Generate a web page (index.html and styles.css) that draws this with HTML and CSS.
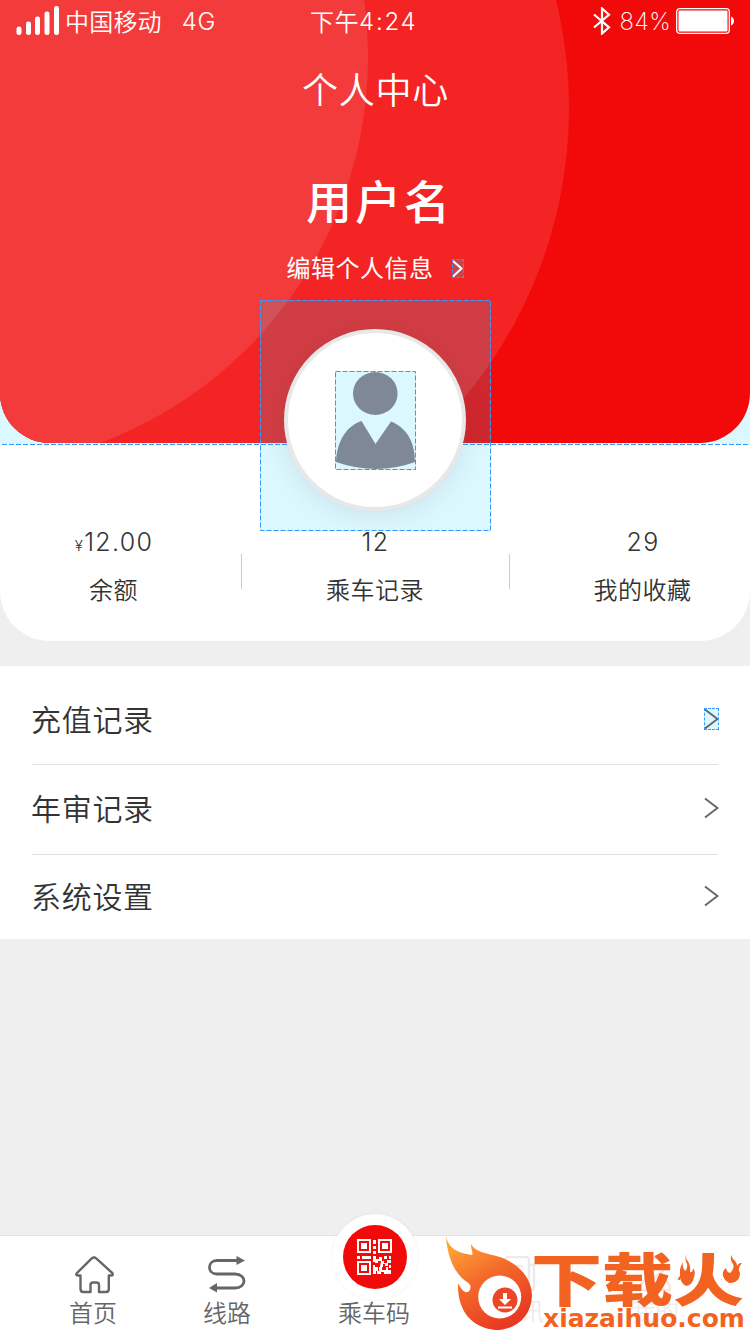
FILE: index.html
```html
<!DOCTYPE html>
<html lang="zh-CN">
<head>
<meta charset="utf-8">
<title>个人中心</title>
<link rel="stylesheet" href="styles.css">
</head>
<body>
<main class="app">
  <section class="summary">
    <header class="hero">
      <svg class="hero-art" viewBox="0 0 750 443" aria-hidden="true">
        <circle cx="116" cy="108" r="453" fill="#f42424"/>
        <circle cx="-44" cy="57" r="412" fill="#f43b3b"/>
      </svg>
      <div class="status">
        <div class="status-left">
          <svg width="44" height="30" viewBox="0 0 44 30" fill="#fff"><rect x=".5" y="20.500" width="5" height="8.500" rx="2.300"/><rect x="10" y="15.500" width="5" height="13.500" rx="2.300"/><rect x="19" y="10.500" width="5" height="18.500" rx="2.300"/><rect x="28.500" y="5.500" width="5" height="23.500" rx="2.300"/><rect x="38" y="0" width="5" height="29" rx="2.300"/></svg>
          <span class="carrier">中国移动</span><span class="net">4G</span>
        </div>
        <span class="clock"><span>下午</span><span class="clock-digits">4:24</span></span>
        <div class="status-right">
          <svg width="18" height="28" viewBox="0 0 18 28" fill="none" stroke="#fff" stroke-width="2.200"><path d="M1 7.500 16 20.300 9 26.500V1.500L16 7.700 1 20.500"/></svg>
          <span class="percent">84%</span>
          <svg width="58" height="26" viewBox="0 0 58 26"><rect x=".7" y=".7" width="52.600" height="24.600" rx="3" fill="none" stroke="#fff" stroke-width="1.300"/><rect x="2.500" y="2.500" width="49" height="21" rx="1" fill="#fff"/><path d="M55 8.500c4 1 4 8 0 9z" fill="#fff"/></svg>
        </div>
      </div>
      <h1 class="title">个人中心</h1>
      <h2 class="username">用户名</h2>
      <a class="edit"><span>编辑个人信息</span><span class="mark mark-edit"><svg width="11" height="17" viewBox="0 0 11 17" fill="none" stroke="#fff" stroke-width="2"><path d="m1 1 8.500 7.500L1 16.500"/></svg></span></a>
    </header>
    <div class="avatar-area">
      <div class="avatar">
        <svg width="81" height="99" viewBox="0 0 81 99"><rect width="81" height="99" fill="#dbf8ff"/><g fill="#7f8897"><ellipse cx="40.300" cy="22.500" rx="22.300" ry="21.500"/><path d="M26.500 50 40.500 73 56 50.500C70 56 80 69 80 91Q61 98 41 98 21 98 1 91C2 69 12 55 26.500 50Z"/></g><rect x=".5" y=".5" width="80" height="98" fill="none" stroke="#39f" stroke-dasharray="5 2"/></svg>
      </div>
      <svg class="avatar-frame" width="231" height="231"><rect x=".5" y=".5" width="230" height="230" fill="none" stroke="#39f" stroke-dasharray="5 2"/></svg>
    </div>
    <svg class="guide" width="750" height="1" aria-hidden="true"><path d="M2 .5H287M463 .5H750" stroke="#39f" stroke-dasharray="5 2"/></svg>
    <div class="stats">
      <div class="stat"><span class="value"><small>¥</small>12.00</span><span class="label">余额</span></div>
      <div class="stat"><span class="value">12</span><span class="label">乘车记录</span></div>
      <div class="stat"><span class="value">29</span><span class="label">我的收藏</span></div>
    </div>
  </section>

  <nav class="list">
    <a class="row row-first"><span>充值记录</span><span class="mark"><svg class="chev" width="15" height="22" viewBox="0 0 15 22"><path d="M1 1.500 13.500 11 1 20.500"/></svg></span></a>
    <a class="row row-middle"><span>年审记录</span><svg class="chev" width="15" height="22" viewBox="0 0 15 22"><path d="M1 1.500 13.500 11 1 20.500"/></svg></a>
    <a class="row row-last"><span>系统设置</span><svg class="chev" width="15" height="22" viewBox="0 0 15 22"><path d="M1 1.500 13.500 11 1 20.500"/></svg></a>
  </nav>

  <footer class="tabs">
    <a class="tab tab-home"><svg width="40" height="38" viewBox="0 0 40 38" fill="none" stroke="#666" stroke-width="2.400" stroke-linejoin="round"><path d="M16.500 2.600Q19 .6 21.500 2.600L37.300 17Q38.700 19.500 36 19.500H33.800V33Q33.800 36 31 36H24V29Q24 26.500 21.500 26.500H18Q15.500 26.500 15.500 29V36H8.500Q5.500 36 5.500 33V19.500H3Q.2 19.500 2 17Z"/></svg><span>首页</span></a>
    <a class="tab tab-line"><svg width="38" height="38" viewBox="0 0 38 38"><path d="M30 4.500H9C-1 4.500-1 18 9 18H27C39 18 39 32 27 32H7" fill="none" stroke="#666" stroke-width="2.800"/><path d="m28.500 0 8.500 4.500-8.500 4.500zM9 27v9.500L1 32z" fill="#666"/></svg><span>线路</span></a>
    <a class="tab tab-code">
      <span class="code-ring"><span class="code-dot"><svg width="36" height="36" viewBox="0 0 36 36" fill="#fff"><path fill-rule="evenodd" d="M0 0h14v14H0zM2 2v10h10V2zM21 0h14v14H21zM23 2v10h10V2zM0 22h14v14H0zM2 24v10h10V24zM4 4h6v6H4zM25 4h6v6h-6zM4 26h6v6H4z"/><path d="M16 1h3v4h-3zM16 7h3v3h-3zM16 12h3v3h-3zM0 17h3v3H0zM5 17h9v3H5zM16 17h3v3h3v-2h3v4h-4v2h-3v4h3v4h-2v3h-3v-9h2v-3h-2zM27 17h3v3h-3zM32 17h2v3h-2zM24 22h3v2h3v-3h4v3h-3v3h-3v-2h-2v3h-3zM32 26h2v3h-2zM22 28h3v3h4v-3h2v3h3v4h-7v-2h-3v2h-4v-3h2z"/></svg></span></span>
      <span>乘车码</span>
    </a>
    <a class="tab tab-news"><svg width="38" height="36" viewBox="0 0 38 36" fill="none" stroke="#666" stroke-width="2.500"><rect x="4" y="1" width="24" height="33" rx="3"/><path d="M28 9h5v23q0 2-3 2H9M10 10h12M10 19h12"/></svg><span>资讯</span></a>
    <a class="tab tab-me"><svg width="38" height="36" viewBox="0 0 38 36" fill="none" stroke="#f20c0c" stroke-width="2.500"><circle cx="19" cy="11" r="9"/><path d="M4 34q0-12 15-12t15 12z"/></svg><span>我的</span></a>
  </footer>

  <div class="brand">
    <svg class="flame" width="90" height="96" viewBox="0 0 90 96"><defs><linearGradient id="fire" gradientUnits="userSpaceOnUse" x1="5" y1="10" x2="52" y2="92"><stop offset="0" stop-color="#ffa334"/><stop offset=".45" stop-color="#f46a2b"/><stop offset="1" stop-color="#e83a22"/></linearGradient></defs><path fill="url(#fire)" d="M1 0C4 11 12 16 27 18 28.500 16 26 13 26 7 29 13 36 15 45 17.500 70 22 87 39 87 59 86 80 71 93 50 93 27 91 12 74 13 46 16 52 19 56 23 55 27 52 26 47 22 45 14 40 3 27 1 0Z"/><circle cx="54.700" cy="60" r="21.500" fill="#fff"/><circle cx="60" cy="63" r="12.500" fill="#ec4528"/><path d="M58 56h4v6h4l-6 6-6-6h4zM53 69.500h14v2H53z" fill="#fff"/></svg>
    <div class="brand-copy">
      <div class="brand-name"><span>下</span><span>载</span><span>火</span></div>
      <div class="brand-url">xiazaihuo.com</div>
    </div>
    <svg class="sparks" width="68" height="34" viewBox="0 0 68 34"><path fill="#fff" d="M-2 3H17V31H-2zM42 3h26v26H42z"/><path fill="#f26322" d="M7 0Q4 5 7 11 8 16 5 18 2 15 3 9-2 18 0 25 2 32 7 33 13 31 14 24 16 19 13 15 13 20 10 19 11 12 7 7 5 4 7 0ZM52 1Q49 6 53 11 55 16 50 20 47 20 46 15 42 18 43 23 45 29 51 30 60 29 60 20 57 15 62 10 57 10 57 15 58 10 53 6 51 3 52 1Z"/></svg>
  </div>
</main>
</body>
</html>
```
FILE: styles.css
```css
* { box-sizing: border-box; }
body { margin: 0; background: #efefef; font-family: "Noto Sans CJK SC", sans-serif; font-weight: 350; color: #333; }
svg { display: block; flex: none; }
.app { position: relative; width: 750px; height: 1334px; overflow: hidden; display: flex; flex-direction: column; }

.summary { position: relative; height: 641px; background: linear-gradient(#dbf8ff 444px, #fff 444px); border-radius: 0 0 50px 50px; display: flex; flex-direction: column; }
.hero { position: relative; height: 443px; flex: none; background: #f20a0a; border-radius: 0 0 50px 50px; overflow: hidden; color: #fff; display: flex; flex-direction: column; align-items: center; }
.hero-art { position: absolute; inset: 0; }
.status, .title, .username, .edit { position: relative; }
.status { width: 750px; height: 42px; padding: 0 16px 2px; display: grid; grid-template-columns: 294px 108px 1fr; align-items: center; font-size: 24px; line-height: 40px; }
.status-left, .status-right, .clock { display: flex; align-items: center; }
.carrier { margin-left: 5px; padding-bottom: 1px; letter-spacing: .2px; }
.net { margin-left: 20px; padding-top: 2px; font-family: Inter, sans-serif; font-weight: 300; letter-spacing: .5px; }
.clock { white-space: nowrap; letter-spacing: .5px; line-height: 38px; }
.clock-digits { font-family: Inter, sans-serif; font-weight: 350; letter-spacing: 1.8px; padding-top: 2px; }
.status-right { justify-content: flex-end; }
.percent { margin: 0 5px 0 9px; padding-top: 2px; font-family: Inter, sans-serif; font-weight: 200; letter-spacing: .3px; }
.title { margin: 18px 0 0 1px; font-size: 36px; line-height: 56px; font-weight: 350; letter-spacing: .8px; }
.username { margin: 48px 0 0 9px; font-size: 46px; line-height: 70px; font-weight: 500; letter-spacing: 3px; }
.edit { margin: 14px 0 0; height: 40px; display: flex; align-items: center; font-size: 24px; line-height: 38px; font-weight: 400; letter-spacing: .5px; }
.edit > span:first-child { padding-bottom: 2px; }
.mark { background: rgba(15,208,255,.15); outline: 1px dashed #39f; outline-offset: -1px; }
.mark-edit { margin-left: 18px; width: 12px; height: 19px; padding-top: 1px; background: rgba(15,208,255,.2); }

.avatar-area { position: absolute; left: 260px; top: 300px; width: 231px; height: 231px; background: rgba(15,208,255,.15); padding: 29px 0 0 24px; }
.avatar { width: 182px; height: 182px; border: 4px solid #e8e8e8; border-radius: 50%; background: #fff; box-shadow: 0 4px 24px rgba(90,30,50,.1); padding: 38px 0 0 47px; }
.avatar-frame { position: absolute; inset: 0; }
.guide { position: absolute; left: 0; top: 444px; }

.stats { margin-top: 79px; display: grid; grid-template-columns: 241px 268px 241px; }
.stat { position: relative; display: flex; flex-direction: column; align-items: center; }
.stat:first-child { padding-right: 14px; }
.stat:last-child { padding-left: 26px; }
.stat + .stat::before { content: ""; position: absolute; left: 0; top: 32px; width: 1px; height: 35px; background: #ccc; }
.value { height: 40px; font: 300 25px/40px Inter, sans-serif; letter-spacing: 1.3px; padding-left: 1px; }
.value small { font-size: 15px; line-height: 1; }
.label { margin-top: 7px; font-size: 24px; line-height: 40px; letter-spacing: .5px; }

.list { margin-top: 25px; height: 273px; padding: 0 31px; background: #fff; }
.row { position: relative; display: flex; justify-content: space-between; align-items: center; font-size: 30px; line-height: 44px; letter-spacing: .7px; }
.row > span:first-child { padding-bottom: 2px; }
.row::after { content: ""; position: absolute; left: 1px; right: 1px; bottom: 0; height: 1px; background: #e0e0e0; }
.row-first { height: 99px; padding-top: 7px; }
.row-middle { height: 90px; padding-bottom: 4px; }
.row-last { height: 84px; padding-bottom: 2px; }
.row-last::after { display: none; }
.chev path { fill: none; stroke: #666; stroke-width: 2; }

.tabs { margin-top: auto; height: 99px; background: #fff; border-top: 1px solid #e4e4e4; display: grid; grid-template-columns: 186px 82px 212px 80px 190px; font-size: 24px; color: #666; }
.tab { display: flex; flex-direction: column; align-items: center; padding-top: 20px; line-height: 38px; }
.tab > span:last-child { margin-top: -1px; }
.tab-home > span { margin-left: -3px; }
.tab-home { padding-left: 3px; }
.tab-code { padding: 0 0 0 2px; }
.code-ring { width: 86px; height: 86px; margin-top: -22px; border-radius: 50%; background: #fff; box-shadow: 0 0 3px rgba(0,0,0,.07); display: grid; place-items: center; }
.code-dot { width: 64px; height: 64px; border-radius: 50%; background: #f20a0a; display: grid; place-items: center; }
.tab-code > span:last-child { margin: -7px 2px 0 0; }
.tab-news, .tab-me { opacity: .12; }

.brand { position: absolute; left: 445px; top: 1237px; width: 305px; height: 97px; display: flex; color: #f26322; }
.brand-copy { width: 215px; margin-left: -4px; }
.brand-name { display: flex; height: 56px; margin-top: 11px; font-size: 71px; line-height: 56px; font-weight: 900; }
.brand-name span { width: 71px; transform: scaleY(.8); }
.brand-url { margin: 5px 0 0 12px; font: 700 25px/20px "DejaVu Sans", sans-serif; white-space: nowrap; }
.sparks { position: absolute; left: 235px; top: 16px; }
```
